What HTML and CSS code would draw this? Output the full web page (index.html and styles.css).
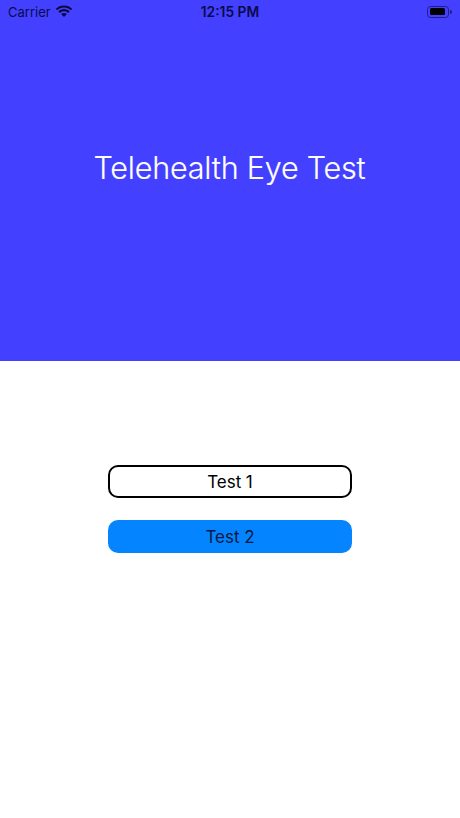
FILE: index.html
```html
<!DOCTYPE html>
<html lang="en">
<head>
<meta charset="utf-8">
<title>Telehealth Eye Test</title>
<link rel="stylesheet" href="styles.css">
</head>
<body>
<header class="hero">
  <div class="status">
    <div class="status-left">
      <span>Carrier</span>
      <svg class="wifi" width="18" height="13" viewBox="0 0 18 13"><path d="M9 2.6c2.6 0 5 1 6.800 2.700L17.300 3.800C15.100 1.600 12.200.4 9 .4S2.900 1.600.7 3.800l1.500 1.500C4 3.600 6.400 2.600 9 2.600z"/><path d="M9 6.300c1.600 0 3 .6 4.100 1.600l1.500-1.500C13.100 5 11.100 4.100 9 4.100S4.900 5 3.400 6.400l1.500 1.500C6 6.900 7.400 6.300 9 6.300z"/><path d="M9 8c-1.100 0-2 .4-2.800 1.100L9 12l2.800-2.900C11 8.400 10.100 8 9 8z"/></svg>
    </div>
    <div class="status-time">12:15 PM</div>
    <div class="status-right">
      <div class="battery"><div class="battery-level"></div></div>
      <div class="battery-cap"></div>
    </div>
  </div>
  <div class="hero-body"><h1 class="title">Telehealth Eye Test</h1></div>
</header>
<main class="actions">
  <button class="btn btn-outline"><span class="btn-label">Test 1</span></button>
  <button class="btn btn-fill"><span class="btn-label">Test 2</span></button>
</main>
</body>
</html>
```
FILE: styles.css
```css
* { box-sizing: border-box; }
html, body { margin: 0; padding: 0; }
body { width: 460px; height: 818px; background: #fff; font-family: Inter, "Liberation Sans", sans-serif; overflow: hidden; }
.hero { height: 361px; background: #4340ff; display: flex; flex-direction: column; }
.status { height: 23px; padding: 0 8px; display: grid; grid-template-columns: 1fr auto 1fr; align-items: center; color: #0b0b4a; font-size: 13px; }
.status-left { display: flex; align-items: center; gap: 5px; }
.wifi { fill: #0a0a3c; margin-top: -1px; margin-left: -1px; }
.status-time { font-weight: 600; font-size: 13.800px; }
.status-right { display: flex; align-items: center; justify-content: flex-end; }
.battery { width: 22px; height: 12px; border: 1px solid #1f1d80; border-radius: 3.500px; padding: 1.500px; }
.battery-level { width: 15px; height: 100%; background: #000; border-radius: 1.500px; }
.battery-cap { width: 2px; height: 4px; background: #1f1d80; border-radius: 0 2px 2px 0; margin-left: 1px; }
.hero-body { flex: 1; display: flex; justify-content: center; padding-top: 125px; padding-right: 1px; }
.title { margin: 0; font-size: 30.500px; font-weight: 300; line-height: 40px; color: #fff; letter-spacing: -.2px; -webkit-text-stroke: .15px #fff; }
.actions { display: flex; flex-direction: column; align-items: center; gap: 22px; padding-top: 104px; }
.btn { width: 244px; height: 33px; border-radius: 10px; font: 400 17px/1 Inter, "Liberation Sans", sans-serif; color: #000; padding: 0; }
.btn-label { display: block; padding-top: 1px; letter-spacing: -.05px; }
.btn-outline { background: #fff; border: 2.500px solid #000; }
.btn-fill { background: #0584ff; border: 0; color: #061a40; }
```
